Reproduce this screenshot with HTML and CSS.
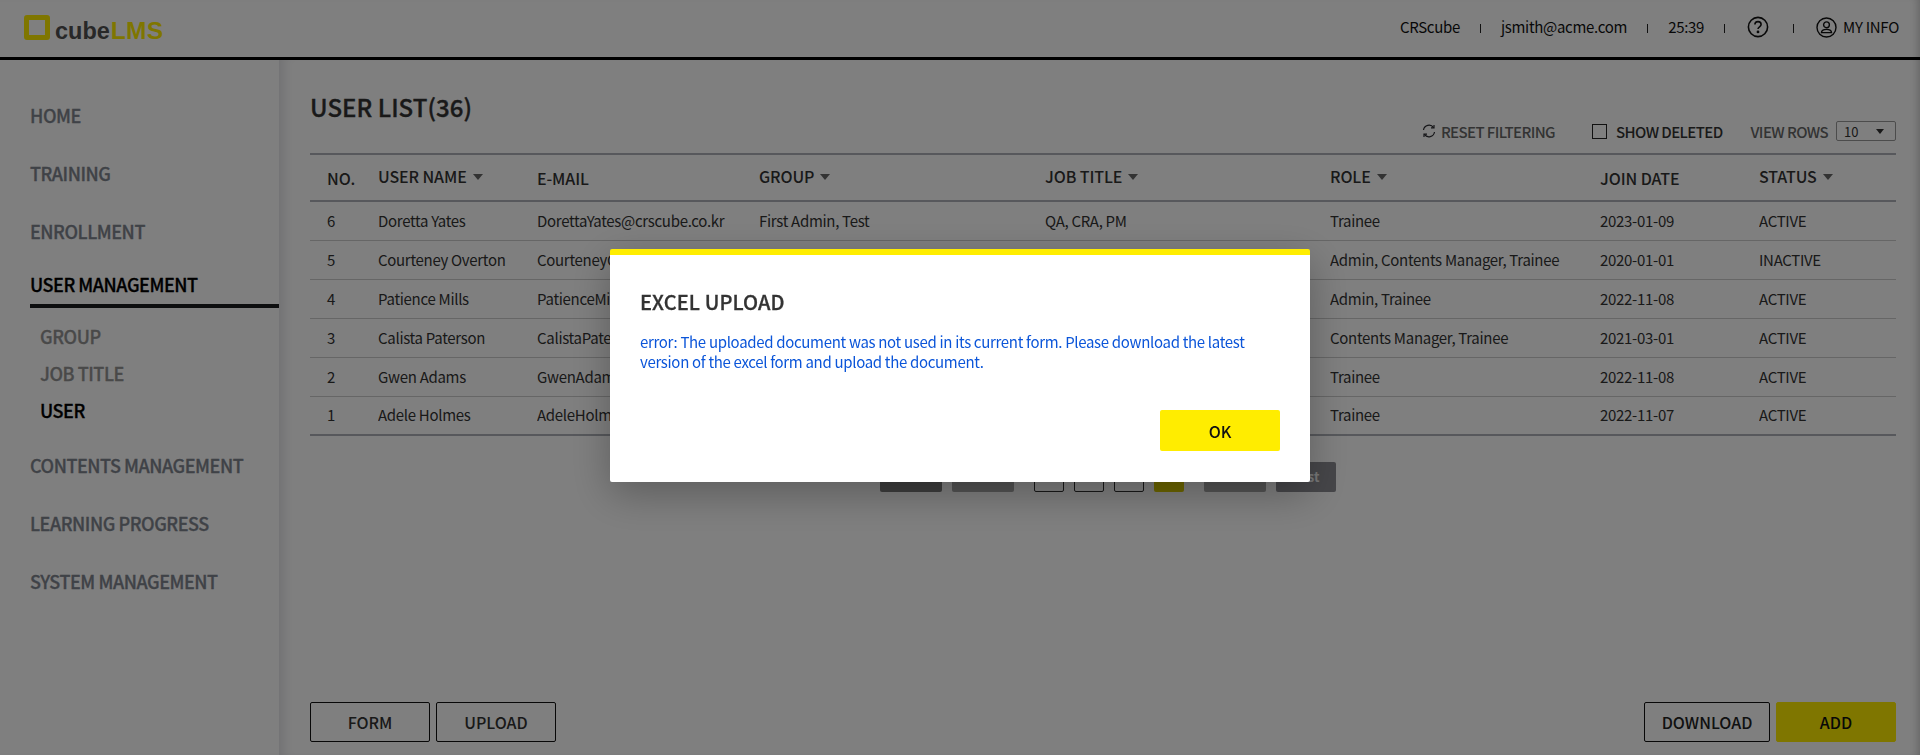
FILE: index.html
```html
<!DOCTYPE html>
<html lang="en">
<head>
<meta charset="utf-8">
<title>cubeLMS - User List</title>
<link rel="stylesheet" href="styles.css">
</head>
<body>
<div class="app">
  <header class="topbar">
    <div class="logo">
      <span class="logo-box"></span><span class="logo-cube">cube</span><span class="logo-lms">LMS</span>
    </div>
    <nav class="util">
      <span class="util-item">CRScube</span><i class="sep"></i>
      <span class="util-item">jsmith@acme.com</span><i class="sep"></i>
      <span class="util-item">25:39</span><i class="sep"></i>
      <svg class="ico-help" width="22" height="22" viewBox="0 0 22 22" fill="none" stroke="#111" stroke-width="1.6"><circle cx="11" cy="11" r="9.6"/><path d="M7.9 8.6c0-1.9 1.4-3 3.1-3s3.1 1.1 3.1 2.8c0 2.4-3.1 2.4-3.1 4.7"/><circle cx="11" cy="15.9" r=".6" fill="#111"/></svg>
      <i class="sep sep-wide"></i>
      <svg class="ico-user" width="21" height="21" viewBox="0 0 21 21" fill="none" stroke="#111" stroke-width="1.4"><circle cx="10.5" cy="10.5" r="9.5"/><circle cx="10.5" cy="7.8" r="2.9"/><path d="M5.5 15.6c0-2.2 1.6-3.2 5-3.2s5 1 5 3.2z"/></svg>
      <span class="util-item myinfo">MY INFO</span>
    </nav>
  </header>
  <div class="body">
    <aside class="side">
      <a class="m">HOME</a>
      <a class="m">TRAINING</a>
      <a class="m">ENROLLMENT</a>
      <a class="m m-on">USER MANAGEMENT</a>
      <div class="subs">
        <a class="s">GROUP</a>
        <a class="s">JOB TITLE</a>
        <a class="s s-on">USER</a>
      </div>
      <a class="m">CONTENTS MANAGEMENT</a>
      <a class="m">LEARNING PROGRESS</a>
      <a class="m">SYSTEM MANAGEMENT</a>
    </aside>
    <main class="main">
      <div class="head-row">
        <h1 class="title">USER LIST(36)</h1>
        <div class="tools">
          <span class="tool reset">
            <svg width="14" height="14" viewBox="0 0 14 14" fill="none" stroke="#2b2b30" stroke-width="1.2"><path d="M1.5 6A5.6 5.6 0 0 1 11.6 3.6"/><path d="M12.5 8A5.6 5.6 0 0 1 2.4 10.4"/><path d="M12 .9v3h-3"/><path d="M2 13.1v-3h3"/></svg>
            RESET FILTERING
          </span>
          <span class="tool show"><i class="check"></i>SHOW DELETED</span>
          <span class="tool rows">VIEW ROWS<span class="select">10<b class="arrow"></b></span></span>
        </div>
      </div>
      <table class="grid">
        <colgroup>
          <col class="c1"><col class="c2"><col class="c3"><col class="c4"><col class="c5"><col class="c6"><col class="c7"><col class="c8">
        </colgroup>
        <thead>
          <tr>
            <th class="low">NO.</th>
            <th>USER NAME<b class="caret"></b></th>
            <th class="low">E-MAIL</th>
            <th>GROUP<b class="caret"></b></th>
            <th>JOB TITLE<b class="caret"></b></th>
            <th>ROLE<b class="caret"></b></th>
            <th class="low">JOIN DATE</th>
            <th>STATUS<b class="caret"></b></th>
          </tr>
        </thead>
        <tbody>
          <tr><td>6</td><td>Doretta Yates</td><td>DorettaYates@crscube.co.kr</td><td>First Admin, Test</td><td>QA, CRA, PM</td><td>Trainee</td><td>2023-01-09</td><td>ACTIVE</td></tr>
          <tr><td>5</td><td>Courteney Overton</td><td>CourteneyOverton@crscube.co.kr</td><td></td><td></td><td>Admin, Contents Manager, Trainee</td><td>2020-01-01</td><td>INACTIVE</td></tr>
          <tr><td>4</td><td>Patience Mills</td><td>PatienceMills@crscube.co.kr</td><td></td><td></td><td>Admin, Trainee</td><td>2022-11-08</td><td>ACTIVE</td></tr>
          <tr><td>3</td><td>Calista Paterson</td><td>CalistaPaterson@crscube.co.kr</td><td></td><td></td><td>Contents Manager, Trainee</td><td>2021-03-01</td><td>ACTIVE</td></tr>
          <tr><td>2</td><td>Gwen Adams</td><td>GwenAdams@crscube.co.kr</td><td></td><td></td><td>Trainee</td><td>2022-11-08</td><td>ACTIVE</td></tr>
          <tr><td>1</td><td>Adele Holmes</td><td>AdeleHolmes@crscube.co.kr</td><td></td><td></td><td>Trainee</td><td>2022-11-07</td><td>ACTIVE</td></tr>
        </tbody>
      </table>
      <div class="pager">
        <span class="pg pg-first"></span>
        <span class="pg pg-nav pg-gapr"></span>
        <span class="num"></span><span class="num"></span><span class="num"></span><span class="num num-on"></span>
        <span class="pg pg-nav pg-gapl"></span>
        <span class="pg pg-last">Last</span>
      </div>
      <div class="actions">
        <div class="group">
          <button class="btn">FORM</button>
          <button class="btn">UPLOAD</button>
        </div>
        <div class="group">
          <button class="btn btn-dl">DOWNLOAD</button>
          <button class="btn btn-add">ADD</button>
        </div>
      </div>
    </main>
  </div>
</div>
<div class="overlay">
  <section class="dialog">
    <h2 class="dlg-title">EXCEL UPLOAD</h2>
    <p class="dlg-msg">error: The uploaded document was not used in its current form. Please download the latest version of the excel form and upload the document.</p>
    <div class="dlg-foot"><button class="ok">OK</button></div>
  </section>
</div>
</body>
</html>
```
FILE: styles.css
```css
* { box-sizing: border-box; }
html, body { margin: 0; height: 100%; overflow: hidden; }
body {
  font-family: "Noto Sans CJK KR", "Noto Sans", sans-serif;
  color: #222;
  background: #fff;
}
.app { height: 755px; display: flex; flex-direction: column; }

.topbar {
  height: 60px;
  flex: none;
  border-bottom: 3px solid #000;
  display: flex;
  align-items: center;
  justify-content: space-between;
  padding: 0 21px 3px 24px;
  background: #fff;
}
.logo { display: flex; align-items: flex-end; height: 25px; }
.logo-box {
  width: 26px; height: 25px;
  border: 5px solid #ffed00;
  border-radius: 3px;
  margin-right: 5px;
}
.logo-cube, .logo-lms {
  font-family: "Liberation Sans", sans-serif;
  font-weight: 700;
  line-height: 18px;
}
.logo-cube { color: #505050; font-size: 23.5px; }
.logo-lms { color: #ffed00; font-size: 24.5px; margin-left: 1px; letter-spacing: .3px; }

.util { display: flex; align-items: center; font-size: 15px; color: #111; }
.sep { width: 1px; height: 9px; background: #222; margin: 2px 20px 0; }
.sep-wide { margin: 2px 22px 0 24px; }
.ico-help { margin-left: 2px; }
.ico-user { margin-right: 6px; }
.util-item { line-height: 20px; letter-spacing: -.3px; }

.body { flex: 1; display: flex; min-height: 0; }
.side {
  width: 279px;
  flex: none;
  padding: 31px 0 0 30px;
  display: flex;
  flex-direction: column;
  align-items: stretch;
}
.m {
  height: 58px;
  line-height: 48px;
  font-family: "Noto Sans CJK KR Medium", "Noto Sans CJK KR", sans-serif;
  font-size: 18px;
  color: #7f858e;
  letter-spacing: -.45px;
  -webkit-text-stroke: .3px currentColor;
}
.m-on {
  height: 43px;
  line-height: 38px;
  color: #000;
  border-bottom: 4px solid #1a1c1e;
}
.subs { display: flex; flex-direction: column; padding: 10px 0 12px 10px; }
.s {
  height: 37px;
  line-height: 37px;
  font-family: "Noto Sans CJK KR Medium", "Noto Sans CJK KR", sans-serif;
  font-size: 18px;
  color: #929292;
  letter-spacing: -.45px;
  -webkit-text-stroke: .3px currentColor;
}
.s-on { color: #000; }

.main {
  flex: 1;
  min-width: 0;
  padding: 0 24px 13px 31px;
  display: flex;
  flex-direction: column;
  box-shadow: inset 12px 0 12px -8px rgba(40,45,70,.14);
}
.head-row { height: 93px; display: flex; justify-content: space-between; }
.title {
  margin: 33px 0 0;
  font-family: "Noto Sans CJK KR Medium", "Noto Sans CJK KR", sans-serif;
  font-size: 24px;
  line-height: 28px;
  font-weight: 400;
  color: #333;
  letter-spacing: .05px;
  -webkit-text-stroke: .35px currentColor;
}
.tools {
  display: flex; align-items: flex-end; padding-bottom: 11px; font-size: 15px;
  font-family: "Noto Sans CJK KR Medium", "Noto Sans CJK KR", sans-serif;
}
.tool { display: flex; align-items: center; height: 22px; letter-spacing: -.6px; }
.reset { gap: 5px; margin-right: 37px; color: #666; }
.show { margin-right: 28px; color: #333; }
.rows { color: #666; }
.check { width: 15px; height: 15px; border: 1px solid #222; margin-right: 9px; background: #fff; }
.select {
  width: 60px; height: 20px;
  border: 1px solid #999;
  border-radius: 2px;
  margin-left: 8px;
  padding-left: 7px;
  display: flex; align-items: center; justify-content: space-between;
  font-family: "Noto Sans CJK KR", sans-serif;
  font-size: 13px; color: #333; letter-spacing: 0;
}
.arrow {
  width: 0; height: 0;
  border: 4px solid transparent;
  border-top: 5px solid #333;
  border-bottom: 0;
  margin-right: 11px;
}

.grid { width: 100%; border-collapse: collapse; table-layout: fixed; font-size: 15px; letter-spacing: -.3px; }
.c1 { width: 68px; } .c2 { width: 159px; } .c3 { width: 222px; } .c4 { width: 286px; }
.c5 { width: 285px; } .c6 { width: 270px; } .c7 { width: 159px; } .c8 { width: 137px; }
.grid th {
  height: 47px;
  padding: 0 0 3px;
  text-align: left;
  font-family: "Noto Sans CJK KR Medium", "Noto Sans CJK KR", sans-serif;
  font-size: 16px;
  font-weight: 400;
  color: #333;
  letter-spacing: -.1px;
  border-top: 2px solid #aeb1b8;
  border-bottom: 2px solid #aeb1b8;
}
.grid th.low { padding-top: 1px; padding-bottom: 0; }
.grid th:first-child, .grid td:first-child { padding-left: 17px; }
.caret {
  display: inline-block;
  width: 0; height: 0;
  margin: 0 0 3px 6px;
  vertical-align: middle;
  border: 5px solid transparent;
  border-top: 6px solid #666;
  border-bottom: 0;
}
.grid td {
  height: 39px;
  padding: 0 0 1px;
  color: #333;
  white-space: nowrap;
  overflow: hidden;
  border-bottom: 1px solid #ccc;
}
.grid tbody tr:last-child td { border-bottom: 2px solid #aeb1b8; }

.pager { display: flex; align-items: center; margin: 26px 0 0 570px; height: 30px; }
.pg { width: 62px; height: 30px; border-radius: 2px; background: #a7a7a7; }
.pg-first { background: #7c7c7c; margin-right: 10px; }
.pg-gapr { margin-right: 20px; }
.pg-gapl { margin: 0 10px 0 20px; }
.pg-last { width: 60px; background: #8d8d93; color: #eee; font-size: 13px; font-weight: 700; line-height: 30px; text-align: center; }
.num { width: 30px; height: 30px; margin-right: 10px; border: 1px solid #333; border-radius: 2px; background: #fff; }
.num-on { background: #d9cb00; border: 0; margin-right: 0; }

.actions { margin-top: auto; display: flex; justify-content: space-between; }
.group { display: flex; gap: 6px; }
.btn {
  width: 120px; height: 40px;
  border: 1px solid #111;
  border-radius: 2px;
  background: #fff;
  font: 400 16px "Noto Sans CJK KR Medium", "Noto Sans CJK KR", sans-serif;
  color: #333;
  padding: 0;
}
.btn-dl { width: 126px; color: #222; }
.btn-add { background: #ffed00; border-color: #ffed00; color: #111; }

.overlay {
  position: fixed;
  inset: 0;
  background: rgba(0,0,0,.5);
  box-shadow: inset -8px 0 8px -6px rgba(0,0,0,.22);
}
.dialog {
  position: absolute;
  left: 610px;
  top: 249px;
  width: 700px;
  height: 233px;
  background: #fff;
  border-top: 6px solid #ffed00;
  border-radius: 2px;
  padding: 30px 25px 0 30px;
  box-shadow: 0 12px 40px rgba(0,0,0,.28);
}
.dlg-title {
  margin: 0;
  font-family: "Noto Sans CJK KR Medium", "Noto Sans CJK KR", sans-serif;
  font-size: 20px;
  line-height: 34px;
  font-weight: 400;
  color: #333;
  letter-spacing: .1px;
  -webkit-text-stroke: .3px currentColor;
}
.dlg-msg {
  margin: 13px 0 0;
  font-size: 15px;
  line-height: 20px;
  color: #0b55d9;
  letter-spacing: -.32px;
  width: 630px;
}
.dlg-foot { margin-top: 38px; display: flex; justify-content: flex-end; padding-right: 5px; }
.ok {
  width: 120px; height: 41px;
  border: 0;
  border-radius: 2px;
  background: #ffed00;
  color: #111;
  font: 400 16px "Noto Sans CJK KR Medium", "Noto Sans CJK KR", sans-serif;
  padding: 0;
}
```
